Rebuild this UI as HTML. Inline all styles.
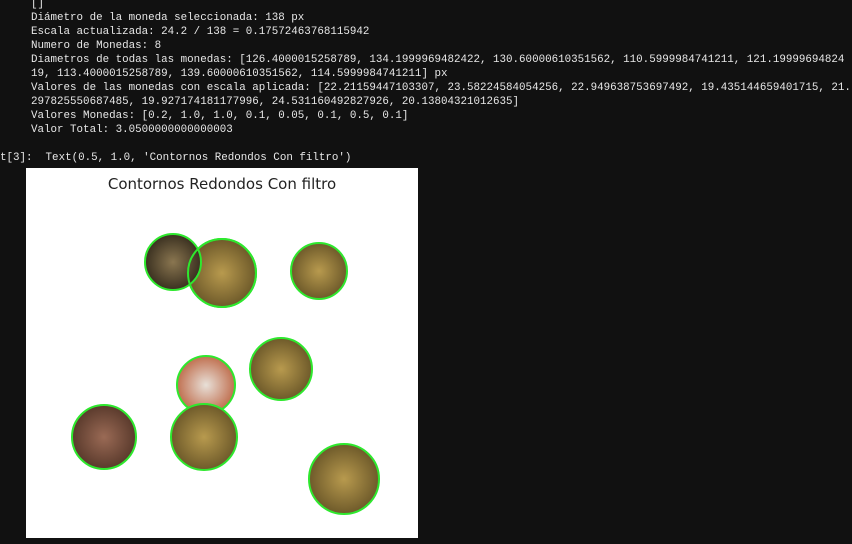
<!DOCTYPE html><html><head><style>
body{margin:0;width:852px;height:544px;background:#111;overflow:hidden;position:relative;font-family:"Liberation Mono",monospace;font-size:10.85px;color:#e8e8e8}
.t{position:absolute;left:31px;white-space:pre;line-height:14px;overflow:hidden;right:0}
.img{position:absolute;left:26px;top:168px;width:392px;height:370px;background:#fff}
.title{position:absolute;left:0;width:100%;top:7px;text-align:center;font-family:"DejaVu Sans",sans-serif;font-size:15px;color:#222}
</style></head><body>
<div class="t" style="top:-3px">[]
Diámetro de la moneda seleccionada: 138 px
Escala actualizada: 24.2 / 138 = 0.17572463768115942
Numero de Monedas: 8
Diametros de todas las monedas: [126.4000015258789, 134.1999969482422, 130.60000610351562, 110.5999984741211, 121.19999694824
19, 113.4000015258789, 139.60000610351562, 114.5999984741211] px
Valores de las monedas con escala aplicada: [22.21159447103307, 23.58224584054256, 22.949638753697492, 19.435144659401715, 21.
297825550687485, 19.927174181177996, 24.531160492827926, 20.13804321012635]
Valores Monedas: [0.2, 1.0, 1.0, 0.1, 0.05, 0.1, 0.5, 0.1]
Valor Total: 3.0500000000000003</div>
<div class="t" style="left:0;top:151px">t[3]:  Text(0.5, 1.0, 'Contornos Redondos Con filtro')</div>
<div class="img"><div class="title">Contornos Redondos Con filtro</div></div>
<svg style="position:absolute;left:0;top:0" width="852" height="544">
<defs><radialGradient id="g"><stop offset="0" stop-color="#b89a4e"/><stop offset="1" stop-color="#6e5a2a"/></radialGradient>
<radialGradient id="b"><stop offset="0" stop-color="#9a6a55"/><stop offset="1" stop-color="#5a3a2c"/></radialGradient>
<radialGradient id="d"><stop offset="0" stop-color="#8a7650"/><stop offset="1" stop-color="#3a3020"/></radialGradient>
<radialGradient id="s"><stop offset="0" stop-color="#e8e0d8"/><stop offset="1" stop-color="#c07050"/></radialGradient></defs>
<g stroke="#2ee82e" stroke-width="2">
<circle cx="222" cy="273" r="34" fill="url(#g)"/>
<circle cx="173" cy="262" r="28" fill="url(#d)"/>
<circle cx="222" cy="273" r="34" fill="none"/>
<circle cx="319" cy="271" r="28" fill="url(#g)"/>
<circle cx="281" cy="369" r="31" fill="url(#g)"/>
<circle cx="206" cy="385" r="29" fill="url(#s)"/>
<circle cx="204" cy="437" r="33" fill="url(#g)"/>
<circle cx="104" cy="437" r="32" fill="url(#b)"/>
<circle cx="344" cy="479" r="35" fill="url(#g)"/>
</g></svg>
</body></html>
